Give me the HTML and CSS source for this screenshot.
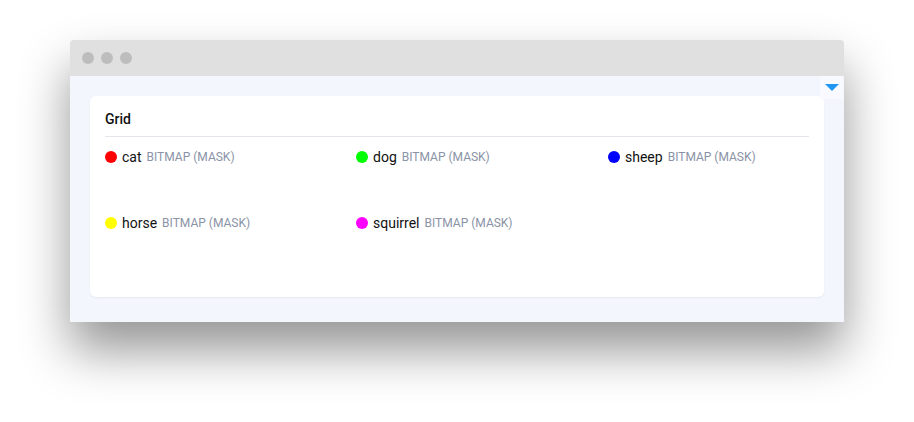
FILE: index.html
```html
<!DOCTYPE html>
<html>
<head>
<meta charset="utf-8">
<link rel="stylesheet" href="styles.css">
</head>
<body>
<div class="window">
  <div class="titlebar">
    <span class="dot"></span><span class="dot"></span><span class="dot"></span>
  </div>
  <div class="content">
    <div class="toggle"><svg width="14" height="8" viewBox="0 0 14 8"><path d="M0 0H14L7 7Z" fill="#2196f3"/></svg></div>
    <div class="card">
      <div class="card-title">Grid</div>
      <div class="grid">
        <div class="item"><span class="swatch" style="background:#ff0000"></span><span class="name">cat</span><span class="type">BITMAP (MASK)</span></div>
        <div class="item"><span class="swatch" style="background:#00ff00"></span><span class="name">dog</span><span class="type">BITMAP (MASK)</span></div>
        <div class="item"><span class="swatch" style="background:#0000ff"></span><span class="name">sheep</span><span class="type">BITMAP (MASK)</span></div>
        <div class="item"><span class="swatch" style="background:#ffff00"></span><span class="name">horse</span><span class="type">BITMAP (MASK)</span></div>
        <div class="item"><span class="swatch" style="background:#ff00ff"></span><span class="name">squirrel</span><span class="type">BITMAP (MASK)</span></div>
      </div>
    </div>
  </div>
</div>
</body>
</html>
```
FILE: styles.css
```css
html, body { margin: 0; padding: 0; background: #fff; }
body {
  padding: 40px 0 0 70px;
  min-height: 422px;
  box-sizing: border-box;
  font-family: Roboto, "Liberation Sans", sans-serif;
}
.window {
  width: 774px;
  height: 282px;
  border-radius: 4px 4px 0 0;
  box-shadow: 0 28px 50px rgba(0,0,0,0.42);
  background: #f3f6fd;
  display: flex;
  flex-direction: column;
}
.titlebar {
  height: 36px;
  background: #e0e0e0;
  border-radius: 4px 4px 0 0;
  display: flex;
  align-items: center;
  padding-left: 12px;
  gap: 7px;
}
.dot { width: 12px; height: 12px; border-radius: 50%; background: #bdbdbd; }
.content { position: relative; flex: 1; padding: 20px 20px 0 20px; }
.toggle {
  position: absolute; right: 1px; top: 0;
  width: 23px; height: 23px;
  background: #f8faff;
  display: flex; align-items: center; justify-content: center;
}
.toggle svg { display: block; }
.card {
  background: #fff;
  border-radius: 6px;
  box-shadow: 0 1px 2px rgba(0,0,0,0.06);
  height: 201px;
  box-sizing: border-box;
  padding: 0 15px;
}
.card-title {
  font-size: 14px; font-weight: 500; color: #111;
  height: 40px; line-height: 47px;
  border-bottom: 1px solid #e3e5ea;
}
.grid {
  display: grid;
  grid-template-columns: 251px 252px 1fr;
  grid-auto-rows: 66px;
  padding-top: 9px;
}
.item { display: flex; align-items: center; height: 21px; }
.swatch { width: 12px; height: 12px; border-radius: 50%; margin-right: 5px; flex: none; }
.name { font-size: 14px; color: #111; margin-right: 5px; }
.type { font-size: 12px; color: #8a93a6; }
```
